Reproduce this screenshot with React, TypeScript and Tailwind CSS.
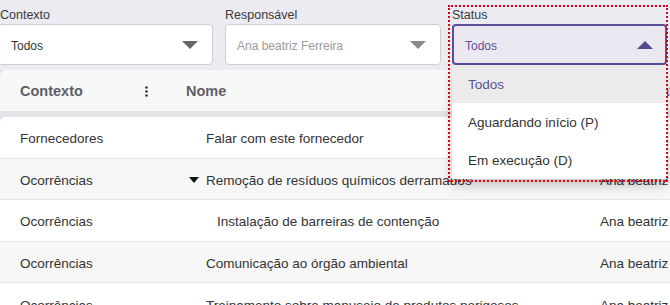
import React from 'react';

const rows = [
  { ctx: 'Fornecedores', name: 'Falar com este fornecedor', level: 0, open: false },
  { ctx: 'Ocorrências', name: 'Remoção de resíduos químicos derramados', level: 0, open: true },
  { ctx: 'Ocorrências', name: 'Instalação de barreiras de contenção', level: 1, open: false },
  { ctx: 'Ocorrências', name: 'Comunicação ao órgão ambiental', level: 0, open: false },
  { ctx: 'Ocorrências', name: 'Treinamento sobre manuseio de produtos perigosos', level: 0, open: false },
];

function Caret({ up, color }: { up?: boolean; color: string }) {
  return (
    <svg width="16" height="8" viewBox="0 0 16 8" className="shrink-0">
      <polygon points={up ? '0,8 16,8 8,0' : '0,0 16,0 8,8'} fill={color} />
    </svg>
  );
}

export default function App() {
  return (
    <div className="relative w-[670px] h-[305px] overflow-hidden bg-[#ecebf1] font-['Liberation_Sans',Arial,sans-serif] text-[#333]">
      {/* Filters */}
      <div className="flex">
        <div className="-ml-[2px] w-[215px] shrink-0 pt-[6px]">
          <div className="h-[18px] leading-[18px] pl-[2px] text-[12.5px] text-[#3a3a3a]">Contexto</div>
          <div className="h-[41px] flex items-center justify-between pl-[12px] pr-[14px] bg-white border border-[#cfcfcf] rounded-[4px]">
            <span className="pt-[2px] text-[12px] text-[#333]">Todos</span>
            <Caret color="#666" />
          </div>
        </div>

        <div className="ml-[12px] w-[216px] shrink-0 pt-[6px]">
          <div className="h-[18px] leading-[18px] text-[12.5px] text-[#3a3a3a]">Responsável</div>
          <div className="h-[41px] flex items-center justify-between pl-[11px] pr-[14px] bg-white border border-[#cfcfcf] rounded-[4px]">
            <span className="pt-[2px] text-[12px] text-[#9a9a9a]">Ana beatriz Ferreira</span>
            <Caret color="#8a8a8a" />
          </div>
        </div>

        <div className="relative z-10 ml-[11px] w-[215px] shrink-0 pt-[6px]">
          <div className="h-[18px] leading-[18px] text-[12.5px] text-[#3a3a3a]">Status</div>
          <div className="h-[41px] flex items-center justify-between pl-[11px] pr-[12px] bg-[#ebe8f2] border-2 border-[#5b4f97] rounded-[4px]">
            <span className="pt-[2px] text-[12px] text-[#5b5394]">Todos</span>
            <Caret up color="#554a8e" />
          </div>

          {/* open menu */}
          <div className="absolute left-0 top-[65px] w-[215px] bg-white shadow-[0_6px_12px_rgba(0,0,0,0.22)] text-[13.5px]">
            <div className="h-[38px] flex items-center pt-[3px] pl-[16px] bg-[#ebebeb] text-[#5b5394]">Todos</div>
            <div className="h-[38px] flex items-center pt-[3px] pl-[16px]">Aguardando início (P)</div>
            <div className="h-[38px] flex items-center pt-[2px] pl-[16px]">Em execução (D)</div>
          </div>

          {/* dotted highlight */}
          <div className="absolute -left-[4px] top-[5px] w-[220px] h-[177px] border-2 border-dotted border-[#e3000f] pointer-events-none" />
        </div>
      </div>

      {/* Table */}
      <div className="mt-[5px] bg-[#e4e4e8] flex flex-col">
        <div className="h-[41px] flex items-center pt-[2px] bg-[#f7f8f8] rounded-tl-[6px] text-[14.5px] font-bold text-[#5e5e66] whitespace-nowrap">
          <div className="w-[186px] shrink-0 pl-5 pr-[38px] flex items-center justify-between">
            <span>Contexto</span>
            <svg width="3" height="11" viewBox="0 0 3 11">
              <circle cx="1.5" cy="1.5" r="1.3" fill="#333" />
              <circle cx="1.5" cy="5.5" r="1.3" fill="#333" />
              <circle cx="1.5" cy="9.5" r="1.3" fill="#333" />
            </svg>
          </div>
          <div className="w-[414px] shrink-0">Nome</div>
          <div className="shrink-0">Responsável</div>
        </div>

        <div className="mt-[6px] bg-white rounded-tl-[6px] overflow-hidden text-[13.5px] whitespace-nowrap">
          {rows.map((r, i) => (
            <div
              key={i}
              className={`h-[41.6px] flex items-center pt-[4px] border-b border-[#e6e6e6] ${i % 2 === 1 ? 'bg-[#f7f7f7]' : 'bg-white'}`}>
              <div className="w-[186px] shrink-0 pl-5">{r.ctx}</div>
              <div className="w-[414px] shrink-0 flex items-center">
                {r.open ? (
                  <>
                    <svg width="12" height="7" viewBox="0 0 12 7" className="ml-[2px] mr-[6px]">
                      <polygon points="1,0 11,0 6,6" fill="#111" />
                    </svg>
                    <span>{r.name}</span>
                  </>
                ) : (
                  <span className={r.level === 1 ? 'pl-[31px]' : 'pl-5'}>{r.name}</span>
                )}
              </div>
              <div className="shrink-0">Ana beatriz Ferreira</div>
            </div>
          ))}
        </div>
      </div>
    </div>
  );
}
